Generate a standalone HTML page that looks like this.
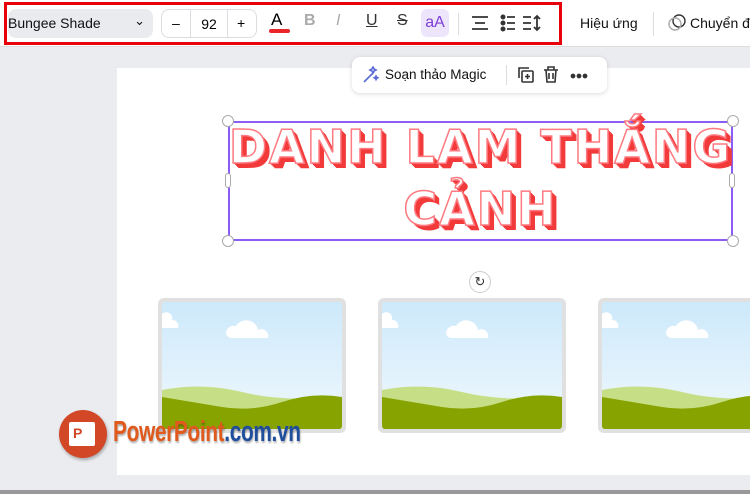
<!DOCTYPE html>
<html><head><meta charset="utf-8"><style>
*{margin:0;padding:0;box-sizing:border-box}
body{width:750px;height:494px;overflow:hidden;background:#ebecf0;font-family:"Liberation Sans",sans-serif;position:relative}
.tb{position:absolute;left:0;top:0;width:750px;height:47px;background:#fff;border-bottom:1px solid #ddd}
.red{position:absolute;left:4px;top:2px;width:558px;height:43px;border:3px solid #e8000b}
.ab{position:absolute}
.font{left:8px;top:9px;width:145px;height:29px;background:#e9ebee;border-radius:8px;font-size:14px;color:#111;padding:6px 0 0 0}
.sz{left:161px;top:9px;width:96px;height:29px;border:1px solid #dcdde0;border-radius:8px;font-size:14px}
.canvas{left:117px;top:68px;width:633px;height:407px;background:#fff}
.card{position:absolute;top:298px;width:188px;height:135px;background:#e0e0e0;border-radius:6px;padding:4px}
.card .in{width:100%;height:100%;border-radius:3px;overflow:hidden}
.title{position:absolute;left:200px;width:561px;text-align:center;white-space:nowrap;font-family:"DejaVu Sans",sans-serif;font-weight:bold;font-size:46px;letter-spacing:2px;color:#fff;-webkit-text-stroke:1.5px #ff7a80;text-shadow:1px 1px 0 #f23a3a,2px 2px 0 #f23a3a,3px 3px 0 #f23a3a,4px 4px 0 #f23a3a,5px 5px 0 #f23a3a}
.h{position:absolute;width:12px;height:12px;border-radius:50%;background:#fff;border:1px solid #aaa}
</style></head><body>
<div class="tb">
 <div class="ab font">Bungee Shade<span style="position:absolute;right:8px;top:4px;font-size:13px">&#8964;</span></div>
 <div class="ab sz"><span style="position:absolute;left:10px;top:5px">–</span><span style="position:absolute;left:28px;top:0;height:27px;border-left:1px solid #dcdde0;border-right:1px solid #dcdde0;width:38px;text-align:center;padding-top:6px">92</span><span style="position:absolute;left:75px;top:5px">+</span></div>
 <div class="ab" style="left:271px;top:10px;font-size:17px">A</div>
 <div class="ab" style="left:269px;top:29px;width:21px;height:4px;background:#e8262c;border-radius:2px"></div>
 <div class="ab" style="left:304px;top:12px;font-size:16px;font-weight:bold;color:#aaa">B</div>
 <div class="ab" style="left:336px;top:12px;font-size:16px;font-style:italic;color:#aaa">I</div>
 <div class="ab" style="left:366px;top:12px;font-size:16px;text-decoration:underline;color:#333">U</div>
 <div class="ab" style="left:397px;top:12px;font-size:16px;text-decoration:line-through;color:#333">S</div>
 <div class="ab" style="left:421px;top:9px;width:28px;height:28px;background:#ede5fc;border-radius:6px;color:#7d3fd6;font-size:16px;text-align:center;padding-top:5px">aA</div>
 <div class="ab" style="left:458px;top:13px;height:22px;border-left:1px solid #ddd"></div>
 <svg class="ab" style="left:470px;top:14px" width="80" height="20" stroke="#333" stroke-width="1.8" fill="none"><path d="M2 3h16M5 9h10M2 15h16"/><circle cx="33" cy="3" r="1.6" fill="#333"/><circle cx="33" cy="9" r="1.6" fill="#333"/><circle cx="33" cy="15" r="1.6" fill="#333"/><path d="M37 3h8M37 9h8M37 15h8M53 3h8M53 9h8M53 15h8M67 2v14M64 5l3-3 3 3M64 13l3 3 3-3"/></svg>
 <div class="ab" style="left:580px;top:15px;font-size:14px;color:#111">Hiệu ứng</div>
 <div class="ab" style="left:653px;top:12px;height:24px;border-left:1px solid #ddd"></div>
 <svg class="ab" style="left:666px;top:12px" width="22" height="22" fill="none" stroke="#333" stroke-width="1.4"><circle cx="13" cy="9" r="6"/><circle cx="9" cy="12" r="6" stroke="#aaa"/></svg>
 <div class="ab" style="left:690px;top:15px;font-size:14px;color:#111;white-space:nowrap">Chuyển đ</div>
 <div class="red"></div>
</div>
<div class="ab canvas"></div>
<div class="ab" style="left:352px;top:57px;width:255px;height:36px;background:#fff;border-radius:8px;box-shadow:0 1px 5px rgba(0,0,0,.15)">
 <svg class="ab" style="left:10px;top:9px" width="18" height="18" fill="none" stroke="#5a6bd8" stroke-width="1.6"><path d="M2 16L12 6M10 3l1-2 1 2 2 1-2 1-1 2-1-2-2-1zM14 10l.6 1.2 1.2.6-1.2.6-.6 1.2-.6-1.2-1.2-.6 1.2-.6z"/></svg>
 <div class="ab" style="left:33px;top:10px;font-size:13.5px;color:#111">Soạn thảo Magic</div>
 <div class="ab" style="left:154px;top:8px;height:20px;border-left:1px solid #ddd"></div>
 <svg class="ab" style="left:164px;top:8px" width="80" height="20" fill="none" stroke="#333" stroke-width="1.6"><rect x="6" y="6" width="11" height="11" rx="1"/><path d="M3 13V3h10M11.5 9v5M9 11.5h5M28 5h14M32 5V2h6v3M30 5l1 12h8l1-12M33 8v6M37 8v6"/><circle cx="57" cy="11" r="1.6" fill="#333"/><circle cx="63" cy="11" r="1.6" fill="#333"/><circle cx="69" cy="11" r="1.6" fill="#333"/></svg>
</div>
<div class="ab" style="left:228px;top:121px;width:505px;height:120px;border:2px solid #8b5cf6"></div>
<div class="title" style="top:120px">DANH LAM THẮNG</div>
<div class="title" style="top:182px">CẢNH</div>
<div class="h" style="left:222px;top:115px"></div><div class="h" style="left:727px;top:115px"></div>
<div class="h" style="left:222px;top:235px"></div><div class="h" style="left:727px;top:235px"></div>
<div class="ab" style="left:225px;top:173px;width:6px;height:15px;background:#fff;border:1px solid #aaa;border-radius:3px"></div>
<div class="ab" style="left:729px;top:173px;width:6px;height:15px;background:#fff;border:1px solid #aaa;border-radius:3px"></div>
<div class="ab" style="left:469px;top:271px;width:22px;height:22px;border-radius:50%;border:1px solid #ccc;background:#fff;font-size:13px;text-align:center;line-height:20px;color:#333">&#8635;</div>
<div class="card" style="left:158px"><div class="in"><svg width="180" height="127"><defs><linearGradient id="s" x1="0" y1="0" x2="0" y2="1"><stop offset="0" stop-color="#cde9fb"/><stop offset="1" stop-color="#f0f8fd"/></linearGradient></defs><rect width="180" height="127" fill="url(#s)"/><path d="M64 32a8 8 0 0 1 10-8a12 12 0 0 1 22 4a7 7 0 0 1 10 8H70a6 6 0 0 1-6-4z M0 12a6 6 0 0 1 10 6a6 6 0 0 1 6 8H0z" fill="#fff"/><path d="M0 88Q40 80 80 90T180 95V127H0z" fill="#c6df86"/><path d="M0 95Q30 100 60 105T120 100T180 95V127H0z" fill="#86a300"/></svg></div></div>
<div class="card" style="left:378px"><div class="in"><svg width="180" height="127"><rect width="180" height="127" fill="url(#s)"/><path d="M64 32a8 8 0 0 1 10-8a12 12 0 0 1 22 4a7 7 0 0 1 10 8H70a6 6 0 0 1-6-4z M0 12a6 6 0 0 1 10 6a6 6 0 0 1 6 8H0z" fill="#fff"/><path d="M0 88Q40 80 80 90T180 95V127H0z" fill="#c6df86"/><path d="M0 95Q30 100 60 105T120 100T180 95V127H0z" fill="#86a300"/></svg></div></div>
<div class="card" style="left:598px;width:160px"><div class="in"><svg width="180" height="127"><rect width="180" height="127" fill="url(#s)"/><path d="M64 32a8 8 0 0 1 10-8a12 12 0 0 1 22 4a7 7 0 0 1 10 8H70a6 6 0 0 1-6-4z M0 12a6 6 0 0 1 10 6a6 6 0 0 1 6 8H0z" fill="#fff"/><path d="M0 88Q40 80 80 90T180 95V127H0z" fill="#c6df86"/><path d="M0 95Q30 100 60 105T120 100T180 95V127H0z" fill="#86a300"/></svg></div></div>
<div class="ab" style="left:59px;top:410px;width:48px;height:48px;border-radius:50%;background:#d24726;box-shadow:1px 2px 3px rgba(0,0,0,.3)"><div class="ab" style="left:10px;top:12px;width:26px;height:24px;background:#fff;border-radius:2px;color:#d24726;font-weight:bold;font-size:14px;padding:3px 0 0 4px">P</div></div>
<div class="ab" style="left:113px;top:416px;font-size:29px;font-weight:bold;letter-spacing:-0.5px;transform:scaleX(0.72);transform-origin:left;text-shadow:1px 2px 2px rgba(0,0,0,.3);white-space:nowrap"><span style="color:#e05a1e">PowerPoint</span><span style="color:#1f4e9c">.com.vn</span></div>
<div class="ab" style="left:0;top:490px;width:750px;height:4px;background:#999"></div>
</body></html>
